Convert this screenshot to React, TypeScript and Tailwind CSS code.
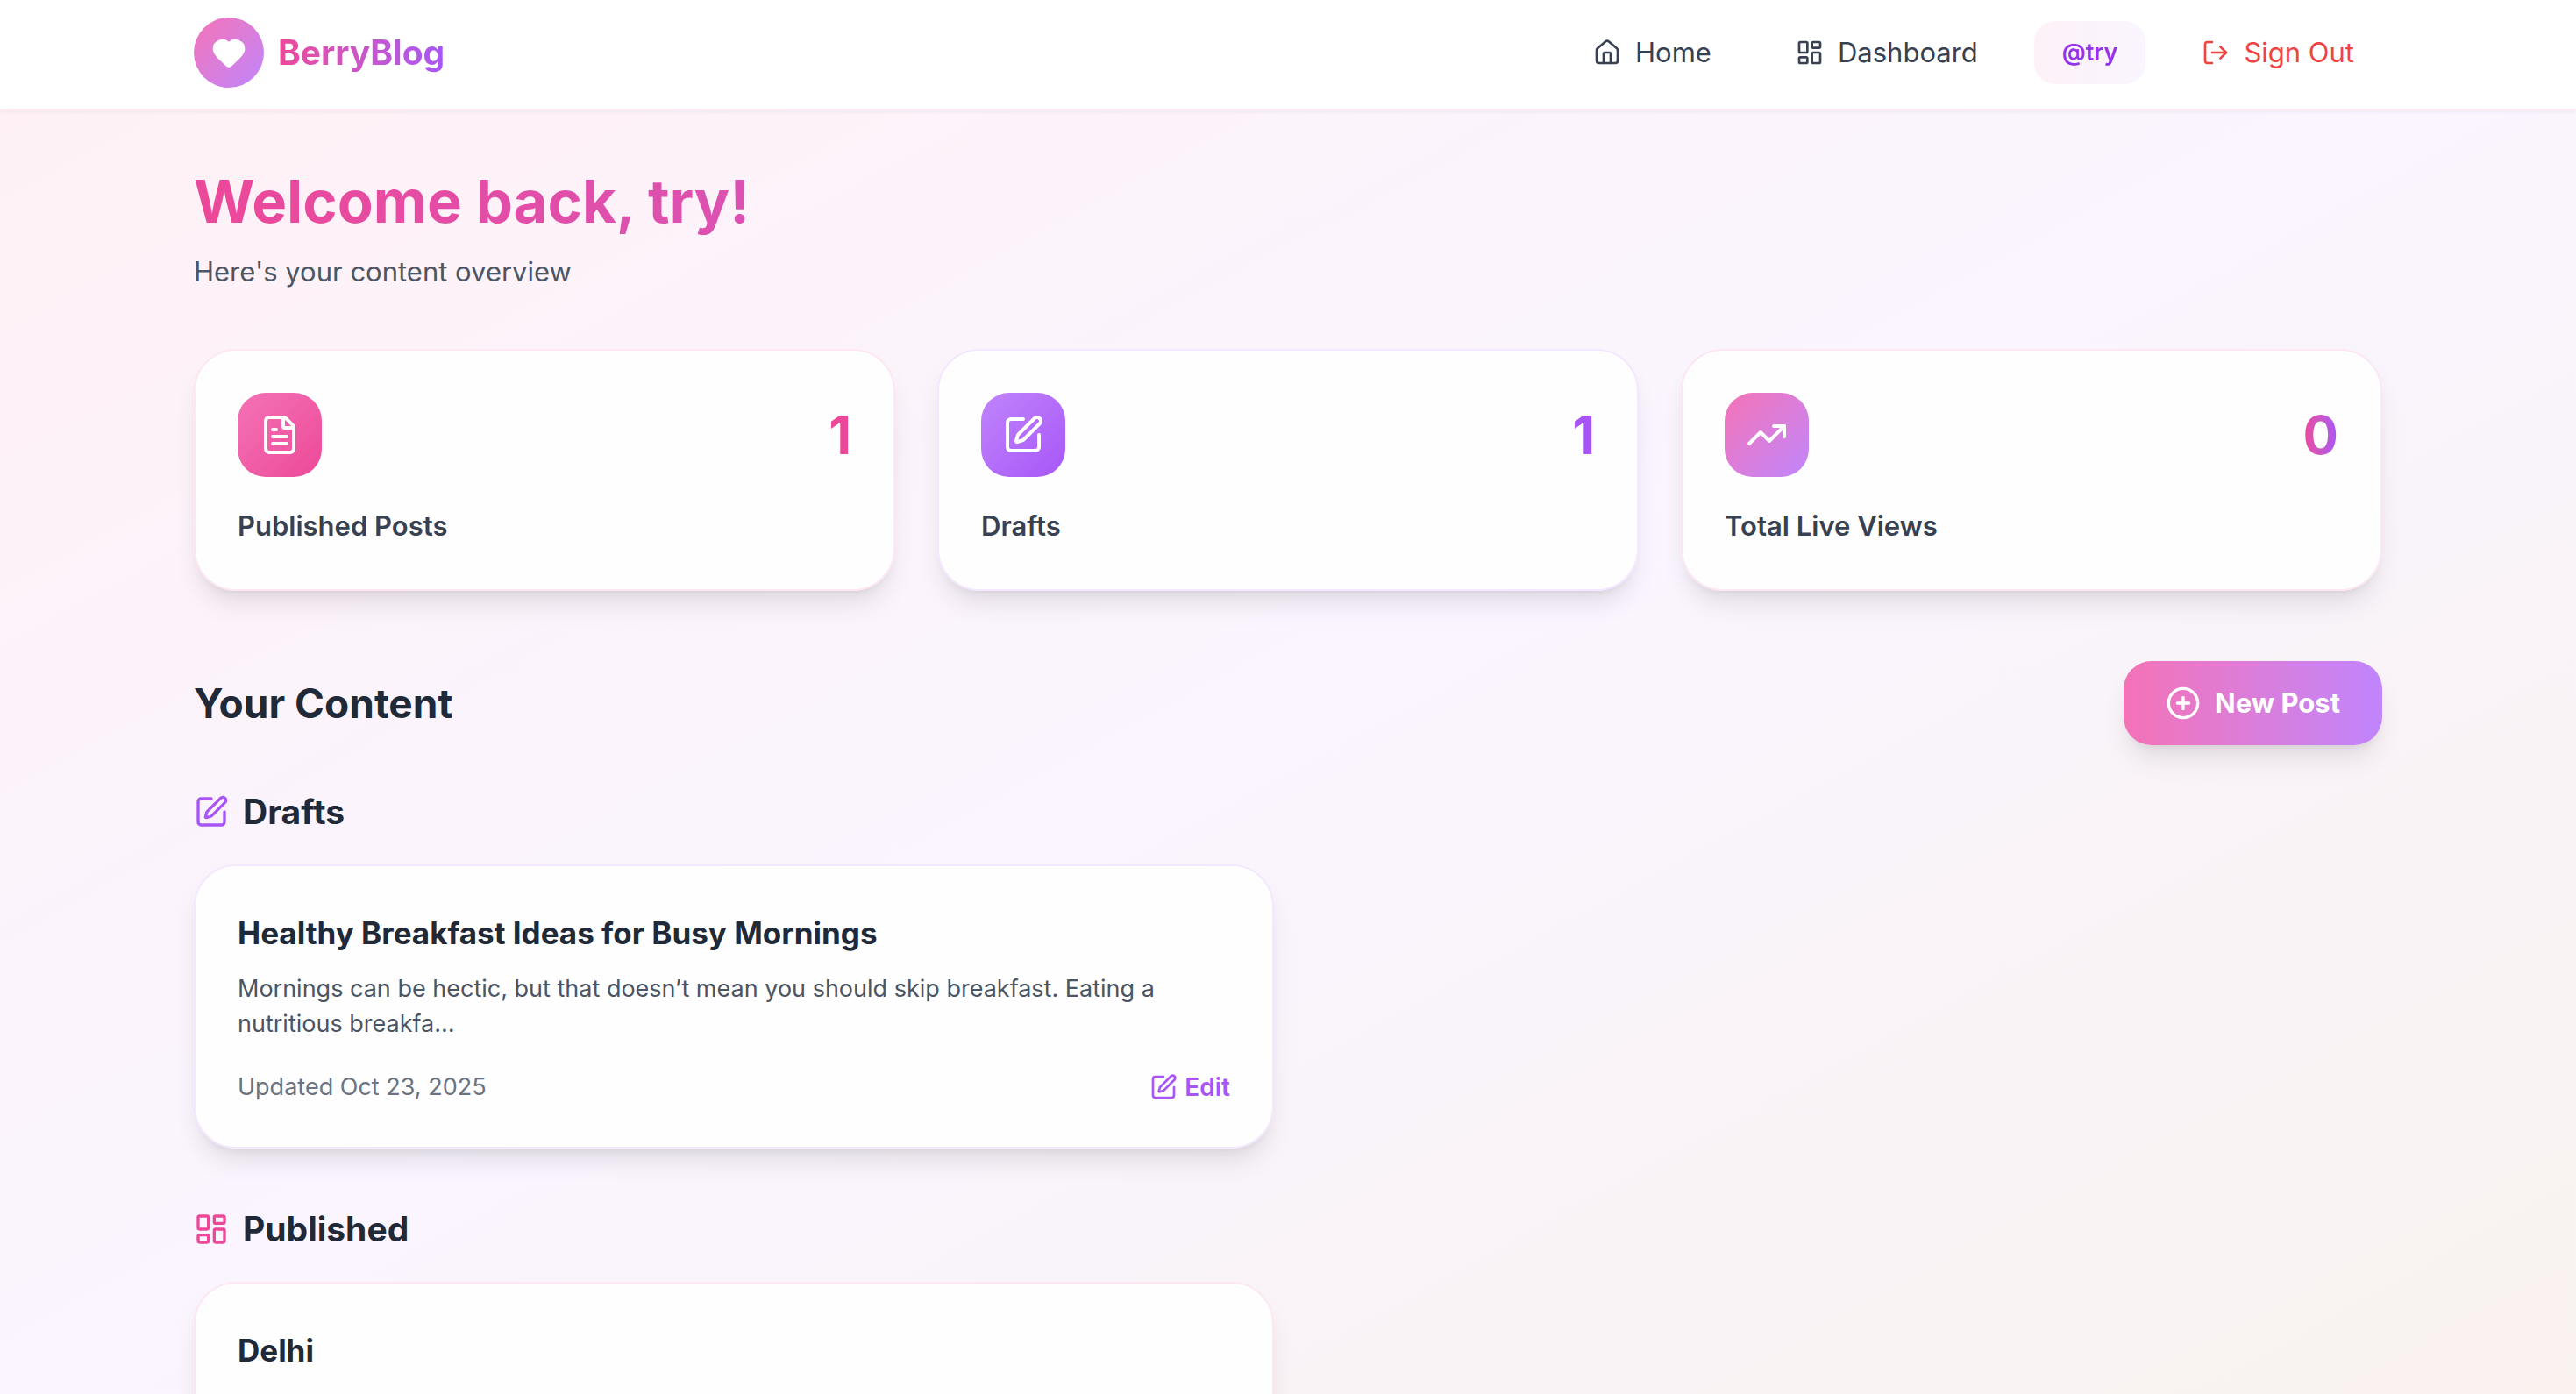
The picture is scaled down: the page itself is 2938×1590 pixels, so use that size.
import type { ReactNode } from "react";
import { CirclePlus, FileText, Heart, House, LayoutDashboard, LogOut, SquarePen, TrendingUp } from "lucide-react";

const card = "rounded-[48px] border-2 bg-white/90 p-12 shadow-[0_20px_30px_-6px_rgba(0,0,0,0.1),0_8px_12px_-8px_rgba(0,0,0,0.1)]";

function Stat(props: { icon: ReactNode; value: number; label: string; border: string; tile: string; number: string }) {
  return (
    <section className={`${card} ${props.border}`}>
      <div className="mb-8 flex items-center justify-between">
        <div className={`flex size-24 items-center justify-center rounded-[32px] text-white ${props.tile}`}>{props.icon}</div>
        <span className={`bg-clip-text text-[60px] leading-[72px] font-bold text-transparent ${props.number}`}>{props.value}</span>
      </div>
      <h3 className="text-[31px] leading-[48px] font-semibold text-[#374151]">{props.label}</h3>
    </section>
  );
}

function Post(props: { title: string; excerpt: string; date: string; border: string; accent: string }) {
  return (
    <article className={`${card} ${props.border}`}>
      <h4 className="mb-4 text-[35px] leading-[56px] font-bold text-[#1f2937]">{props.title}</h4>
      <p className="mb-8 text-[27px] leading-[40px] text-[#4b5563]">{props.excerpt}</p>
      <div className="flex items-center justify-between leading-[40px]">
        <span className="text-[27px] text-[#6b7280]">{props.date}</span>
        <a href="#edit" className={`flex items-center gap-2 text-[28px] font-semibold ${props.accent}`}>
          <SquarePen size={32} />
          Edit
        </a>
      </div>
    </article>
  );
}

export default function App() {
  return (
    <div className="h-screen overflow-hidden bg-linear-to-br from-[#fff1f5] via-[#faf5ff] to-[#f9f2ef] font-['Inter',sans-serif]">
      <nav className="border-b-2 border-[#fce7f3] bg-white px-8 pt-5 pb-6 shadow-[0_2px_4px_rgba(0,0,0,0.05)]">
        <div className="mx-auto flex max-w-[2496px] items-center justify-between">
          <a href="#top" className="flex items-center gap-4">
            <span className="flex size-20 items-center justify-center rounded-full bg-linear-to-br from-[#f472b6] to-[#c084fc] text-white">
              <Heart size={40} fill="currentColor" />
            </span>
            <span className="bg-linear-to-r from-[#ec4899] to-[#a855f7] bg-clip-text text-[39px] leading-[56px] font-bold text-transparent">BerryBlog</span>
          </a>
          <div className="flex items-center gap-8 text-[31px] leading-[48px] text-[#374151]">
            <a href="#home" className="flex items-center gap-4 px-8 py-3">
              <House size={32} />
              Home
            </a>
            <a href="#dashboard" className="flex items-center gap-4 px-8 py-3">
              <LayoutDashboard size={32} />
              Dashboard
            </a>
            <a href="#profile" className="rounded-[24px] bg-linear-to-r from-[#fdf2f8] to-[#faf5ff] px-8 py-4 text-[27px] leading-[40px] font-semibold text-[#9333ea]">@try</a>
            <button className="flex items-center gap-4 px-8 py-3 text-[#ef4444]">
              <LogOut size={32} />
              Sign Out
            </button>
          </div>
        </div>
      </nav>

      <main className="px-8 pt-16">
        <div className="mx-auto max-w-[2496px]">
          <header className="mb-16">
            <h1 className="mb-4 bg-linear-to-r from-[#ec4899] to-[#a855f7] bg-clip-text text-[67px] leading-[80px] font-bold text-transparent">Welcome back, try!</h1>
            <p className="text-[31px] leading-[48px] text-[#4b5563]">Here's your content overview</p>
          </header>

          <div className="mb-20 grid grid-cols-3 gap-12">
            <Stat icon={<FileText size={48} />} value={1} label="Published Posts" border="border-[#fce7f3]" tile="bg-linear-to-br from-[#f472b6] to-[#ec4899]" number="bg-[#ec4899]" />
            <Stat icon={<SquarePen size={48} />} value={1} label="Drafts" border="border-[#f3e8ff]" tile="bg-linear-to-br from-[#c084fc] to-[#a855f7]" number="bg-[#a855f7]" />
            <Stat icon={<TrendingUp size={48} />} value={0} label="Total Live Views" border="border-[#fce7f3]" tile="bg-linear-to-br from-[#f472b6] to-[#c084fc]" number="bg-linear-to-r from-[#ec4899] to-[#a855f7]" />
          </div>

          <div className="mb-12 flex items-center justify-between">
            <h2 className="text-[46px] leading-[64px] font-bold text-[#1f2937]">Your Content</h2>
            <button className="flex items-center gap-4 rounded-[32px] bg-linear-to-r from-[#f472b6] to-[#c084fc] px-12 py-6 text-[31px] leading-[48px] font-bold text-white shadow-[0_20px_30px_-6px_rgba(0,0,0,0.1),0_8px_12px_-8px_rgba(0,0,0,0.1)]">
              <CirclePlus size={40} />
              New Post
            </button>
          </div>

          <section className="mb-16">
            <h3 className="mb-8 flex items-center gap-4 text-[39px] leading-[56px] font-bold text-[#1f2937]">
              <SquarePen size={40} className="text-[#a855f7]" />
              Drafts
            </h3>
            <div className="grid grid-cols-2 gap-8">
              <Post title="Healthy Breakfast Ideas for Busy Mornings" excerpt="Mornings can be hectic, but that doesn’t mean you should skip breakfast. Eating a nutritious breakfa..." date="Updated Oct 23, 2025" border="border-[#f3e8ff]" accent="text-[#a855f7]" />
            </div>
          </section>

          <section>
            <h3 className="mb-8 flex items-center gap-4 text-[39px] leading-[56px] font-bold text-[#1f2937]">
              <LayoutDashboard size={40} className="text-[#ec4899]" />
              Published
            </h3>
            <div className="grid grid-cols-2 gap-8">
              <article className={`${card} border-[#fce7f3] pb-20`}>
                <h4 className="text-[35px] leading-[56px] font-bold text-[#1f2937]">Delhi</h4>
              </article>
            </div>
          </section>
        </div>
      </main>
    </div>
  );
}
